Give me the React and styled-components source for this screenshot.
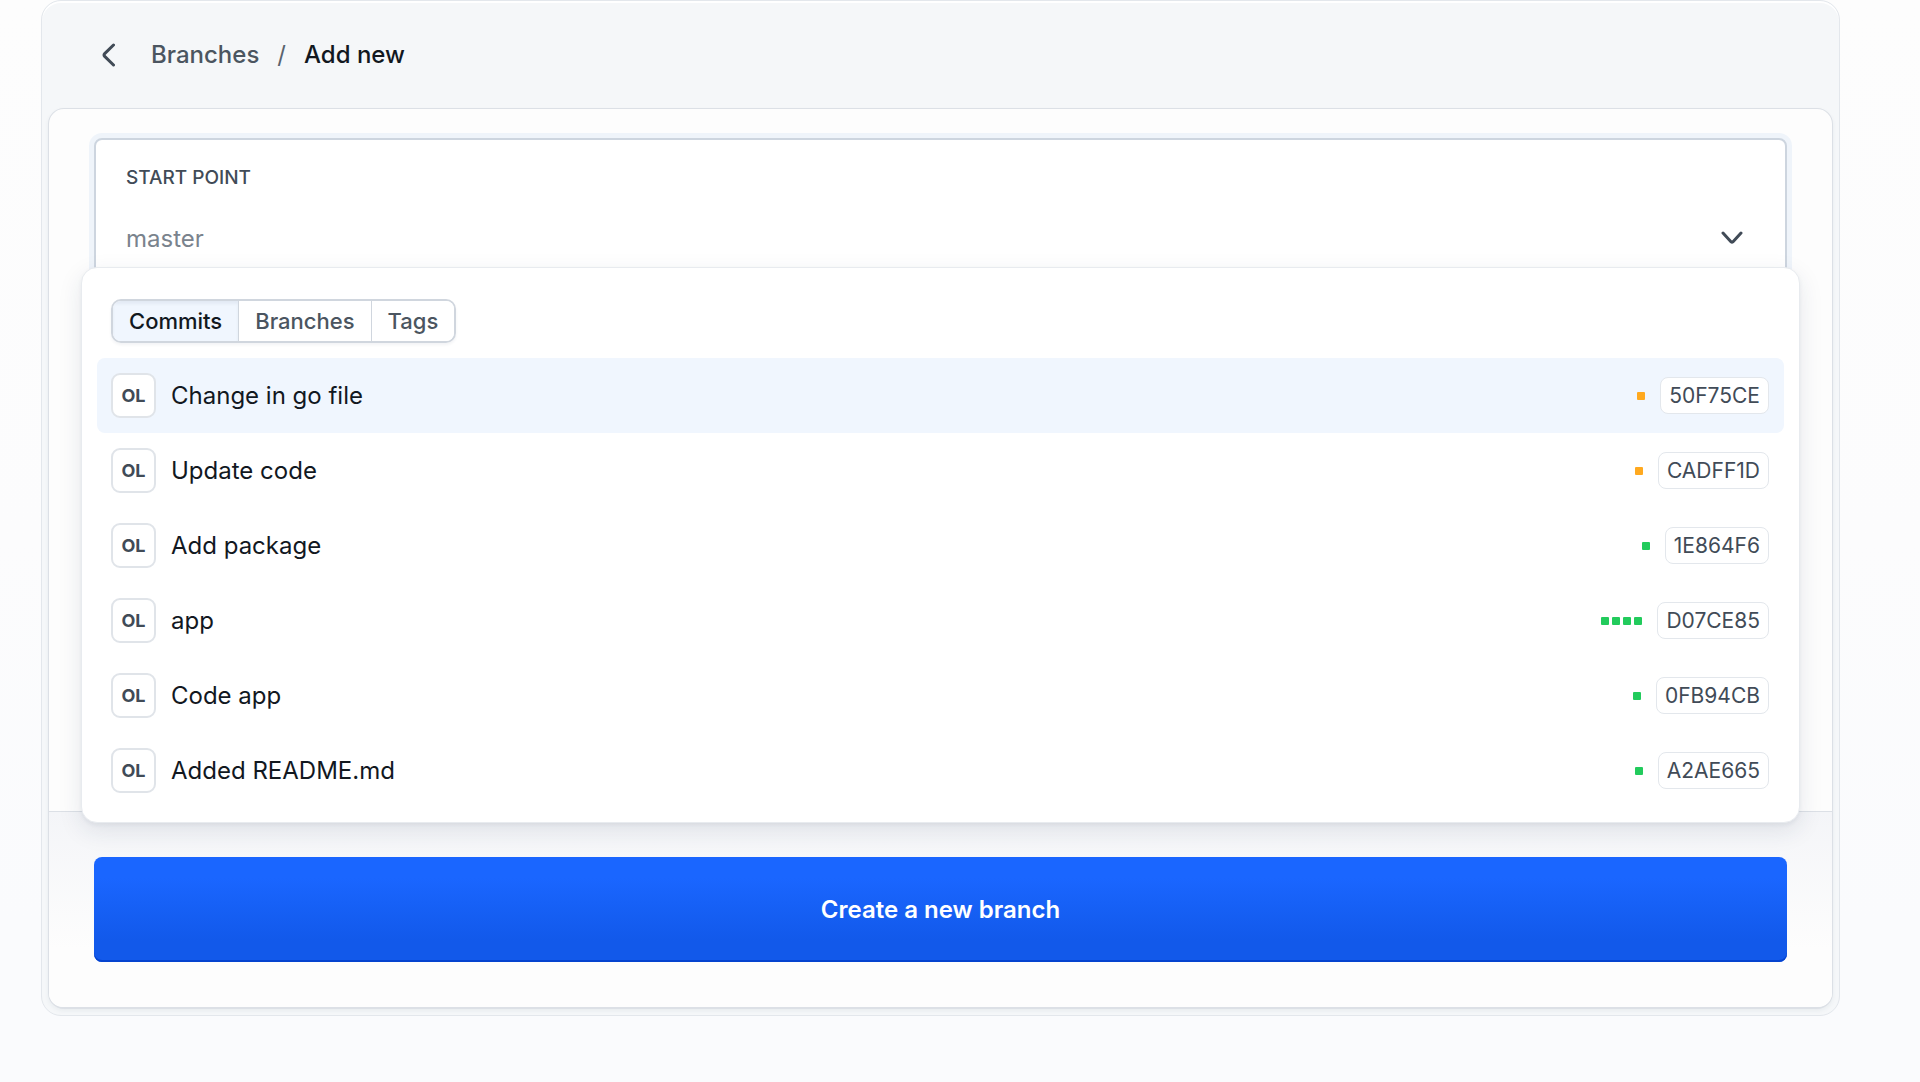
import { useState } from 'react';
import styled, { createGlobalStyle } from 'styled-components';

const tabs = ['Commits', 'Branches', 'Tags'];

const commits = [
    { hash: '50F75CE', name: 'Change in go file', changes: 1, color: '#ffa91f' },
    { hash: 'CADFF1D', name: 'Update code', changes: 1, color: '#ffa91f' },
    { hash: '1E864F6', name: 'Add package', changes: 1, color: '#22cb5c' },
    { hash: 'D07CE85', name: 'app', changes: 4, color: '#22cb5c' },
    { hash: '0FB94CB', name: 'Code app', changes: 1, color: '#22cb5c' },
    { hash: 'A2AE665', name: 'Added README.md', changes: 1, color: '#22cb5c' },
];

export default function App() {
    const [tab, setTab] = useState('Commits');
    const [selected, setSelected] = useState('50F75CE');
    const [point, setPoint] = useState('master');

    function printSquares(commit) {
        let squares = [];
        for (let i = 0; i < commit.changes; i++) {
            squares.push(<Square key={i} $color={commit.color} />);
        }
        return squares;
    }

    return (
        <Page>
            <GlobalStyle />
            <Card>
                <Header>
                    <Back href="#branches" aria-label="Back">
                        <svg width="14" height="24" viewBox="0 0 14 24" fill="none" stroke="currentColor" strokeWidth="3" strokeLinecap="round" strokeLinejoin="round">
                            <path d="M12.5 2 3.7 10.6Q2.4 12 3.7 13.4L12.5 22" />
                        </svg>
                    </Back>
                    <Crumb href="#branches">Branches</Crumb>
                    <Slash>/</Slash>
                    <Current>Add new</Current>
                </Header>
                <Panel>
                    <Body>
                        <Field>
                            <Label htmlFor="start">START POINT</Label>
                            <InputRow>
                                <Input id="start" value={point} onChange={(e) => setPoint(e.target.value)} />
                                <Toggle type="button" aria-label="Toggle list">
                                    <svg width="22" height="14" viewBox="0 0 22 14" fill="none" stroke="currentColor" strokeWidth="3" strokeLinecap="round" strokeLinejoin="round">
                                        <path d="M2 2 10.2 10.9Q11 11.6 11.8 10.9L20 2" />
                                    </svg>
                                </Toggle>
                            </InputRow>
                            <Menu>
                                <Tabs>
                                    {tabs.map(item =>
                                        <Tab key={item} type="button" $active={item === tab} onClick={() => setTab(item)}>{item}</Tab>
                                    )}
                                </Tabs>
                                <List>
                                    {commits.map(item =>
                                        <li key={item.hash}>
                                            <Option type="button" $active={item.hash === selected} onClick={() => setSelected(item.hash)}>
                                                <Avatar>OL</Avatar>
                                                <Name>{item.name}</Name>
                                                <Squares>{printSquares(item)}</Squares>
                                                <Hash>{item.hash}</Hash>
                                            </Option>
                                        </li>
                                    )}
                                </List>
                            </Menu>
                        </Field>
                    </Body>
                    <Footer>
                        <Create type="button">Create a new branch</Create>
                    </Footer>
                </Panel>
            </Card>
        </Page>
    );
}

const GlobalStyle = createGlobalStyle`
    * {
        box-sizing: border-box;
    }
    body {
        margin: 0;
        background: #fafbfd;
        font-family: Inter, sans-serif;
        color: #12181f;
    }
    button, input {
        font-family: inherit;
    }
`;

const Page = styled.main`
    display: flex;
    min-height: 100vh;
    padding: 0 80px 66px 41px;
    background: linear-gradient(#fdfdfd 0%, #fcfcfd 50%, #fafbfd 85%);
`;

const Card = styled.section`
    flex: 1;
    display: flex;
    flex-direction: column;
    padding: 0 6px 6px;
    border: 1px solid #e3e7ec;
    border-radius: 20px;
    background: #f5f7f9;
    box-shadow: inset 0 2px 0 #ffffff;
`;

const Header = styled.header`
    display: flex;
    align-items: center;
    height: 107px;
    padding-left: 53px;
    font-size: 24px;
    font-weight: 500;
    line-height: 32px;
`;

const Back = styled.a`
    display: flex;
    margin-right: 36px;
    color: #414b57;
`;

const Crumb = styled.a`
    color: #4b5560;
    text-decoration: none;
`;

const Slash = styled.span`
    margin: 0 18px;
    font-weight: 400;
    color: #59636e;
`;

const Current = styled.span`
    color: #12181f;
`;

const Panel = styled.div`
    flex: 1;
    display: flex;
    flex-direction: column;
    border: 1px solid #dce0e6;
    border-bottom-width: 2px;
    border-radius: 16px;
    background: #fdfdfd;
    box-shadow: 0 2px 4px rgba(40, 60, 90, 0.06);
`;

const Body = styled.div`
    flex: 1;
    padding: 29px 45px;
`;

const Field = styled.div`
    position: relative;
    padding: 26px 30px 24px;
    border: 2px solid #cdd5df;
    border-radius: 8px;
    background: #ffffff;
    box-shadow: 0 0 0 5px #eff4fa;
`;

const Label = styled.label`
    display: block;
    font-size: 19px;
    font-weight: 500;
    line-height: 24px;
    color: #414b57;
`;

const InputRow = styled.div`
    display: flex;
    align-items: center;
    margin-top: 20px;
    padding-right: 12px;
`;

const Input = styled.input`
    flex: 1;
    min-width: 0;
    height: 56px;
    padding: 0;
    border: 0;
    outline: 0;
    background: transparent;
    font-size: 24px;
    color: #7a838d;
`;

const Toggle = styled.button`
    display: flex;
    padding: 0;
    border: 0;
    background: transparent;
    color: #414b57;
    cursor: pointer;
`;

const Menu = styled.div`
    position: absolute;
    top: 127px;
    left: -15px;
    right: -15px;
    padding: 31px 15px 14px;
    border: 1px solid #e8ebef;
    border-radius: 16px;
    background: #ffffff;
    box-shadow: 0 8px 24px rgba(30, 50, 80, 0.1), 0 2px 4px rgba(30, 50, 80, 0.06);
`;

const Tabs = styled.div`
    display: flex;
    width: fit-content;
    margin: 0 14px 15px;
    border: 2px solid #d0d6de;
    border-radius: 10px;
    box-shadow: 0 2px 3px rgba(30, 50, 80, 0.06);
    overflow: hidden;
`;

const Tab = styled.button`
    padding: 0 16px;
    border: 0;
    background: ${props => props.$active ? '#f0f6fe' : '#ffffff'};
    box-shadow: ${props => props.$active ? 'inset 0 3px 3px rgba(30, 50, 80, 0.06)' : 'none'};
    font-size: 22px;
    font-weight: 500;
    line-height: 40px;
    color: ${props => props.$active ? '#12181f' : '#4b5560'};
    cursor: pointer;

    & + & {
        border-left: 1px solid #d0d6de;
    }
`;

const List = styled.ul`
    margin: 0;
    padding: 0;
    list-style: none;
`;

const Option = styled.button`
    display: flex;
    align-items: center;
    width: 100%;
    height: 75px;
    padding: 0 15px 0 14px;
    border: 0;
    border-radius: 8px;
    background: ${props => props.$active ? '#f0f6fe' : 'transparent'};
    text-align: left;
    cursor: pointer;
`;

const Avatar = styled.span`
    display: flex;
    align-items: center;
    justify-content: center;
    width: 45px;
    height: 45px;
    border: 2px solid #e0e4e9;
    border-radius: 9px;
    background: #ffffff;
    font-size: 18px;
    font-weight: 700;
    color: #414b57;
`;

const Name = styled.span`
    flex: 1;
    margin-left: 15px;
    font-size: 24px;
    line-height: 32px;
    color: #12181f;
`;

const Squares = styled.span`
    display: flex;
    gap: 3px;
    margin-right: 15px;
`;

const Square = styled.span`
    width: 8px;
    height: 8px;
    border-radius: 1px;
    background: ${props => props.$color};
`;

const Hash = styled.span`
    padding: 0 8px;
    border: 1px solid #e3e7ec;
    border-radius: 8px;
    background: #ffffff;
    font-size: 21px;
    line-height: 35px;
    color: #414b57;
`;

const Footer = styled.footer`
    padding: 45px;
    border-top: 1px solid #dce0e6;
    border-radius: 0 0 14px 14px;
    background: linear-gradient(#f4f5f8, #fdfdfd 70%);
`;

const Create = styled.button`
    display: block;
    width: 100%;
    height: 105px;
    border: 0;
    border-radius: 8px;
    background: linear-gradient(#1a66ff 20%, #1259ea 80%);
    box-shadow: inset 0 -2px 0 #0543cf;
    font-size: 24px;
    font-weight: 600;
    color: #ffffff;
    cursor: pointer;
`;
